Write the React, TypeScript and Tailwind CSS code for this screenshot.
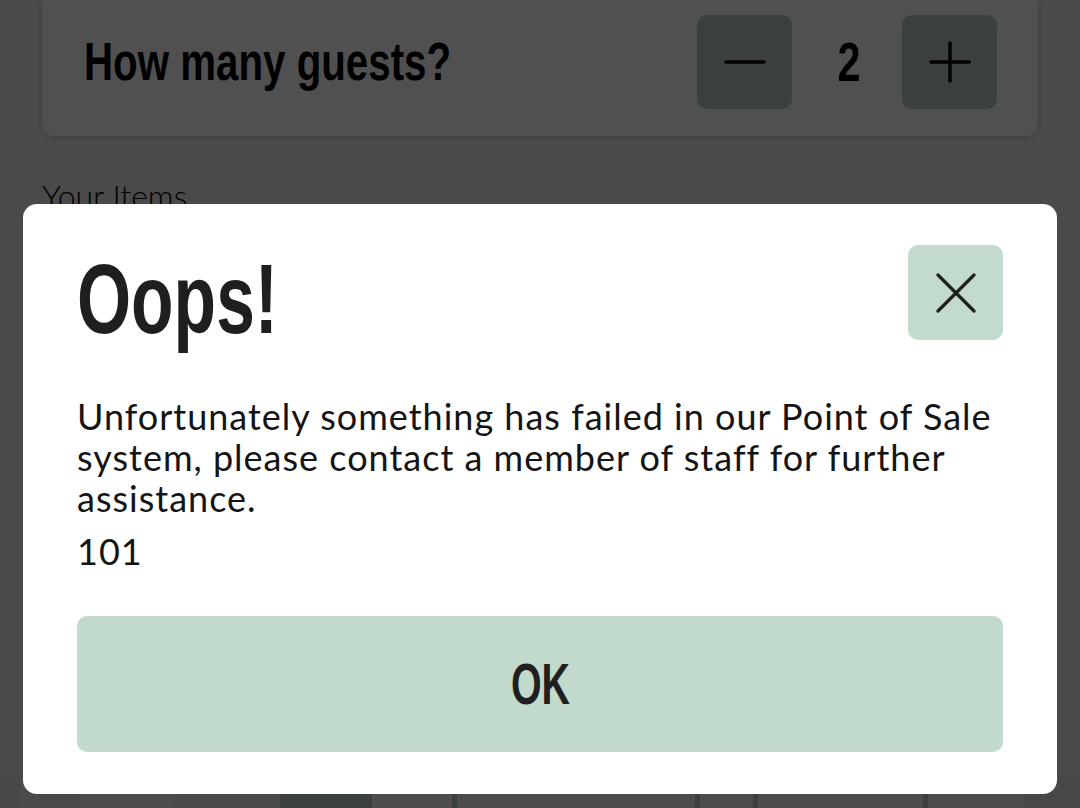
const condensed = "font-['Liberation_Sans','Arial',sans-serif] font-bold";

function Cross() {
  return (
    <svg width="40" height="40" viewBox="0 0 40 40" fill="none" stroke="#1f1f1f" strokeWidth="3.2" strokeLinecap="round">
      <path d="M2 2L38 38M38 2L2 38" />
    </svg>
  );
}

function MinusIcon() {
  return (
    <svg width="42" height="42" viewBox="0 0 42 42" fill="none" stroke="#000" strokeWidth="3.5" strokeLinecap="round">
      <path d="M2 21H40" />
    </svg>
  );
}

function PlusIcon() {
  return (
    <svg width="42" height="42" viewBox="0 0 42 42" fill="none" stroke="#000" strokeWidth="3.5" strokeLinecap="round">
      <path d="M2 21H40M21 2V40" />
    </svg>
  );
}

function GuestCard() {
  return (
    <div className="mx-[42px] flex h-[136px] items-center justify-between rounded-b-xl bg-[#505050] pl-[42px] pr-[41px] pb-[13px] shadow-[0_2px_4px_rgba(0,0,0,0.15)]">
      <h2 className={`${condensed} origin-left scale-x-[0.76] whitespace-nowrap text-[53px] leading-none text-black`}>How many guests?</h2>
      <div className="flex items-center gap-[42px]">
        <button className="flex h-[94px] w-[95px] items-center justify-center rounded-[10px] bg-[#3a403c]">
          <MinusIcon />
        </button>
        <span className={`${condensed} w-[26px] scale-x-[0.74] text-center text-[56px] leading-none text-black`}>2</span>
        <button className="flex h-[94px] w-[95px] items-center justify-center rounded-[10px] bg-[#3a403c]">
          <PlusIcon />
        </button>
      </div>
    </div>
  );
}

function BackgroundRow() {
  const cells = [
    "w-[20px] bg-[#484848]",
    "w-[20px] bg-[#4b4b4b]",
    "w-[40px] bg-[#474a48]",
    "w-[92px] bg-[#4d4d4d]",
    "w-[108px] bg-[#4b4b4b]",
    "w-[92px] bg-[#3b403c]",
    "w-[80px] bg-[#4d4d4d]",
    "w-[5px] bg-[#3b403c]",
    "w-[238px] bg-[#4c4c4c]",
    "w-[5px] bg-[#3b403c]",
    "w-[53px] bg-[#4c4c4c]",
    "w-[5px] bg-[#3b403c]",
    "w-[165px] bg-[#4c4c4c]",
    "w-[5px] bg-[#3b403c]",
    "w-[96px] bg-[#4c4c4c]",
    "flex-1 bg-[#474747]",
  ];
  return (
    <div className="flex h-[60px]">
      {cells.map((c, i) => (
        <div key={i} className={c} />
      ))}
    </div>
  );
}

export default function App() {
  return (
    <div className="relative h-[808px] w-[1080px] overflow-hidden bg-[#4a4a4a] font-['Lato','Open_Sans',sans-serif]">
      <GuestCard />
      <p className="ml-[42px] mt-[44px] text-[32px] font-light leading-none text-black">Your Items</p>
      <div className="h-[563px]" />
      <BackgroundRow />

      <div className="absolute left-[23px] top-[204px] w-[1034px] rounded-[14px] bg-white px-[54px] pt-[41px] pb-[42px]">
        <div className="flex h-[95px] items-start justify-between">
          <h1 className={`${condensed} mt-[7px] origin-left scale-x-[0.71] whitespace-nowrap text-[98px] leading-[95px] text-[#1f1f1f]`}>Oops!</h1>
          <button className="flex h-[95px] w-[95px] items-center justify-center rounded-[10px] bg-[#c2dbcd]">
            <Cross />
          </button>
        </div>
        <p className="mt-[56px] text-[36px] leading-[41px] tracking-[1px] text-[#141414]">
          Unfortunately something has failed in our Point of Sale system, please contact a member of staff for further assistance.
        </p>
        <p className="mt-[12px] text-[36px] leading-[41px] tracking-[1px] text-[#141414]">101</p>
        <button className="mt-[44px] flex h-[136px] w-full items-center justify-center rounded-[10px] bg-[#c1dacc]">
          <span className={`${condensed} scale-x-[0.68] text-[58px] leading-none text-[#1f1f1f]`}>OK</span>
        </button>
      </div>
    </div>
  );
}
